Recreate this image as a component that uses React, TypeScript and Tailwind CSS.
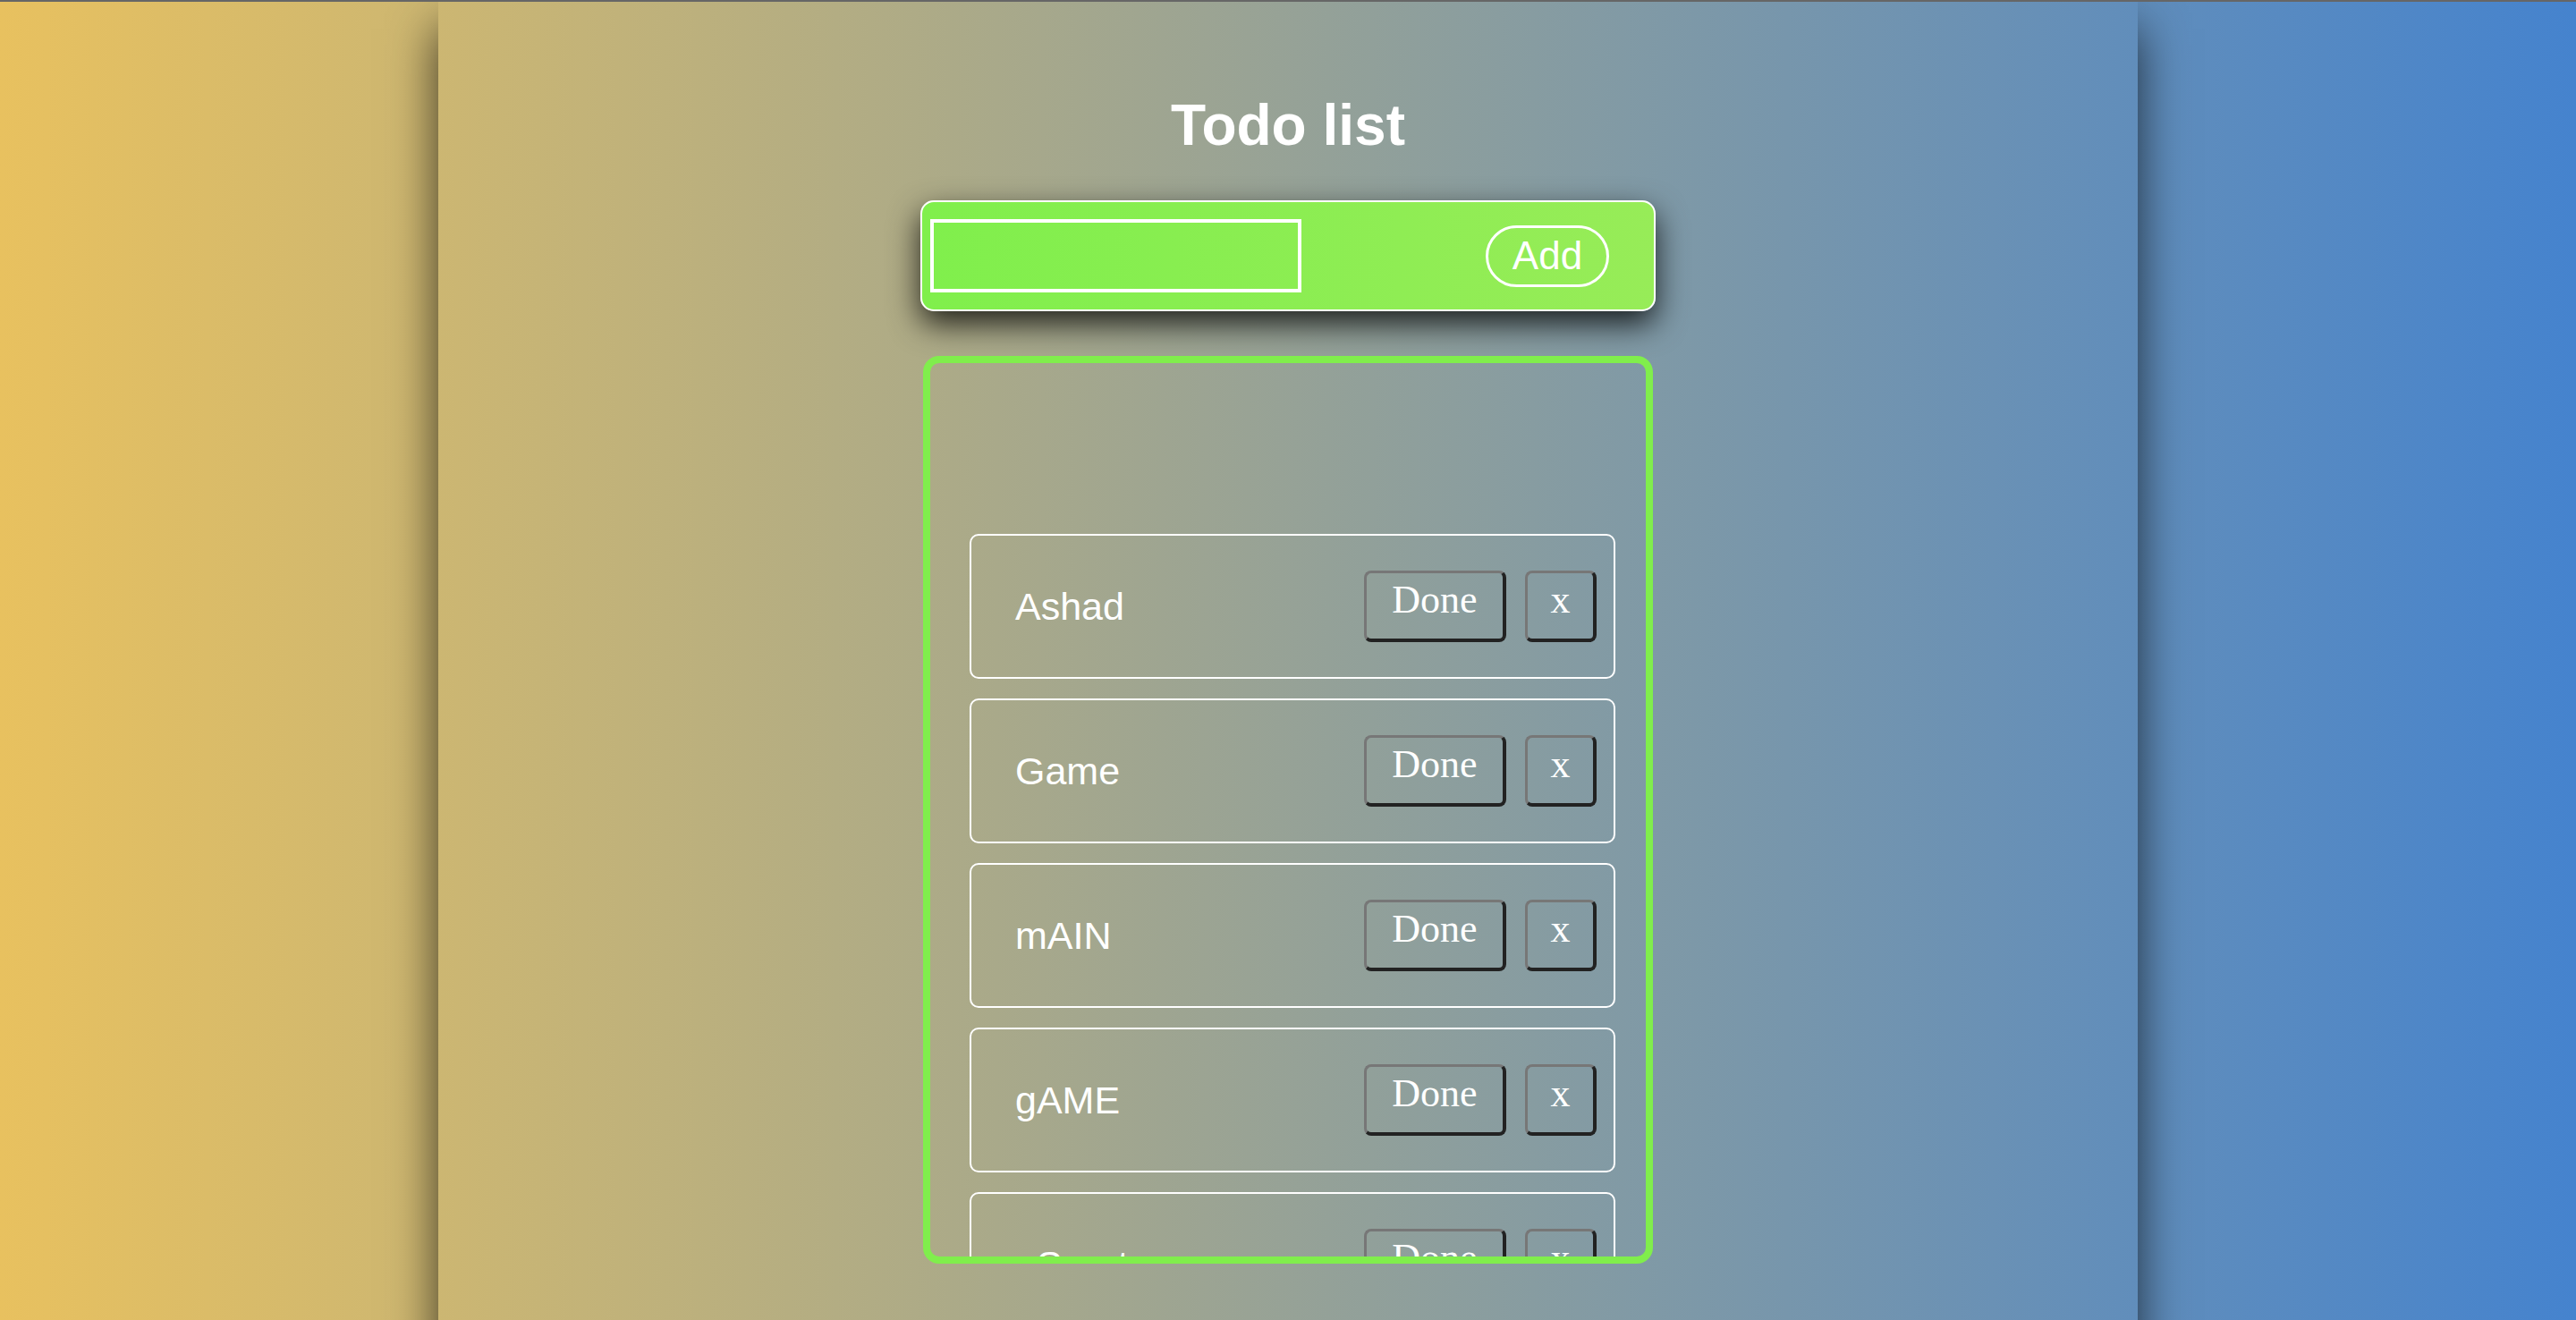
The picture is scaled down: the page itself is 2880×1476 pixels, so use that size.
import React from 'react';

const todos = ['Ashad', 'Game', 'mAIN', 'gAME', 'eSport'];

function TodoItem({ text }: { text: string }) {
  return (
    <li className="flex h-[162px] shrink-0 items-center rounded-[10px] border-2 border-white pl-[49px] pr-[19px]">
      <span className="text-[43px] text-white">{text}</span>
      <div className="ml-auto flex items-center gap-[21px] font-['Liberation_Serif',serif]">
        <button className="flex h-[80px] w-[159px] items-center justify-center rounded-[8px] border-[3px] border-b-4 border-r-4 border-t-[#777] border-l-[#777] border-b-[#222] border-r-[#222] pb-[14px] text-[44px] text-white">
          Done
        </button>
        <button className="flex h-[80px] w-[80px] items-center justify-center rounded-[8px] border-[3px] border-b-4 border-r-4 border-t-[#777] border-l-[#777] border-b-[#222] border-r-[#222] pb-[14px] text-[44px] text-white">
          x
        </button>
      </div>
    </li>
  );
}

export default function App() {
  return (
    <div className="h-[1476px] overflow-hidden border-t-2 border-[#666] bg-[linear-gradient(to_right,#e8c15f,#4583ce)] font-['Liberation_Sans',Arial,sans-serif]">
      <div className="mx-auto flex h-[1600px] w-[1900px] flex-col items-center shadow-[0_30px_50px_rgba(0,0,0,0.7)]">
        <h1 className="mt-[106px] text-[64px] font-bold leading-none text-white">Todo list</h1>

        {/* add form */}
        <form className="mt-[52px] flex h-[124px] w-[822px] items-center rounded-[15px] border-2 border-white bg-[linear-gradient(to_right,#80ef4c,#97ec58)] pl-[9px] pr-[50px] shadow-[0_14px_34px_rgba(0,0,0,0.8)]">
          <input className="h-[82px] w-[415px] border-4 border-white bg-transparent px-3 text-[40px] text-white outline-none" />
          <button
            type="button"
            className="ml-auto flex h-[69px] w-[138px] items-center justify-center rounded-full border-[3px] border-white text-[44px] text-white"
          >
            Add
          </button>
        </form>

        {/* list */}
        <div className="mt-[50px] h-[1015px] w-[816px] overflow-hidden rounded-[18px] border-8 border-[#80ee4c]">
          <ul className="flex flex-col gap-[22px] pl-[44px] pr-[34px] pt-[191px]">
            {todos.map((t) => (
              <TodoItem key={t} text={t} />
            ))}
          </ul>
        </div>
      </div>
    </div>
  );
}
